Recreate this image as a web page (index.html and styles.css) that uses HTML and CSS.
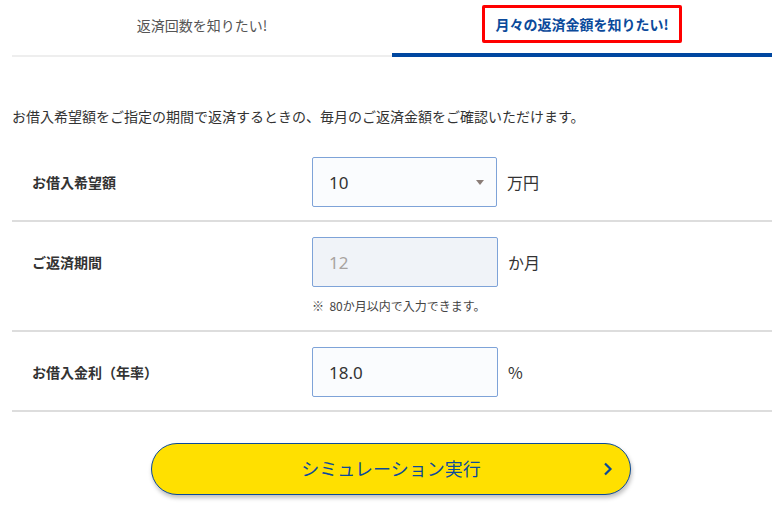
FILE: index.html
```html
<!DOCTYPE html>
<html lang="ja">
<head>
<meta charset="utf-8">
<title>返済シミュレーション</title>
<link rel="stylesheet" href="styles.css">
</head>
<body>
<div class="page">
  <div class="tabs">
    <div class="tab">返済回数を知りたい!</div>
    <div class="tab tab-active"><span class="tab-label">月々の返済金額を知りたい!</span></div>
  </div>
  <p class="lead">お借入希望額をご指定の期間で返済するときの、毎月のご返済金額をご確認いただけます。</p>
  <div class="form">
    <div class="row">
      <div class="label">お借入希望額</div>
      <div class="field">
        <div class="control">
          <div class="box select"><span>10</span><span class="caret"></span></div>
          <span class="unit">万円</span>
        </div>
      </div>
    </div>
    <div class="row">
      <div class="label">ご返済期間</div>
      <div class="field">
        <div class="control">
          <div class="box disabled">12</div>
          <span class="unit">か月</span>
        </div>
        <div class="note">※&nbsp; 80か月以内で入力できます。</div>
      </div>
    </div>
    <div class="row">
      <div class="label">お借入金利（年率）</div>
      <div class="field">
        <div class="control">
          <div class="box">18.0</div>
          <span class="unit">%</span>
        </div>
      </div>
    </div>
  </div>
  <div class="actions">
    <button class="btn" type="button">シミュレーション実行
      <svg class="chev" viewBox="0 0 10 14" width="10" height="14"><path d="M2 1.5 L7.5 7 L2 12.5" fill="none" stroke="#0b4a9b" stroke-width="2.2"/></svg>
    </button>
  </div>
</div>
</body>
</html>
```

FILE: styles.css
```css
* { box-sizing: border-box; }
html, body { margin: 0; padding: 0; background: #fff; }
body {
  font-family: "Noto Sans CJK JP", "Noto Sans", "Liberation Sans", sans-serif;
  color: #333;
}
.page { padding: 0 10px 0 12px; width: 782px; }
.tabs { display: flex; height: 57px; }
.tab {
  flex: 1;
  display: flex;
  align-items: center;
  justify-content: center;
  font-size: 14px;
  color: #555;
  border-bottom: 2px solid #eeeeee;
  padding-bottom: 6px;
}
.tab-active {
  border-bottom: 4px solid #0047a0;
  padding-bottom: 6px;
  color: #0b4a9b;
  font-weight: 700;
}
.tab-label {
  border: 3px solid #ff0000;
  border-radius: 2px;
  padding: 5px 10px;
  line-height: 22px;
}
.lead {
  margin: 47px 0 29px;
  font-size: 14px;
  line-height: 24px;
  color: #333;
}
.row {
  display: flex;
  border-bottom: 2px solid #dddddd;
  padding: 15px 0 13px;
}
.row:first-child { padding-top: 0; }
.label {
  width: 300px;
  padding-left: 20px;
  height: 50px;
  display: flex;
  align-items: center;
  font-size: 14px;
  font-weight: 700;
  color: #333;
}
.field { display: flex; flex-direction: column; }
.control { display: flex; align-items: center; }
.box {
  width: 186px;
  height: 50px;
  border: 1px solid #7ea3d8;
  border-radius: 2px;
  background: #fafcfe;
  display: flex;
  align-items: center;
  padding: 0 16px;
  font-size: 17px;
  color: #333;
  font-family: "Noto Sans", "Noto Sans CJK JP", sans-serif;
}
.select { width: 185px; justify-content: space-between; }
.caret {
  width: 0; height: 0;
  border-left: 4px solid transparent;
  border-right: 4px solid transparent;
  border-top: 5px solid #8a7d78;
  margin-right: -4px;
}
.disabled { background: #f0f3f8; color: #a8a3a0; }
.unit { margin-left: 10px; font-size: 16px; color: #333; }
.note { margin-top: 8px; font-size: 12px; line-height: 22px; color: #444; }
.actions { display: flex; justify-content: center; padding: 31px 0 20px 0; }
.btn {
  position: relative;
  width: 480px;
  height: 52px;
  margin-left: -2px;
  background: #ffe000;
  border: 1px solid #0b4a9b;
  border-radius: 26px;
  box-shadow: 1px 3px 4px rgba(0,0,0,0.25);
  font-family: "Noto Sans CJK JP", sans-serif;
  font-size: 18px;
  color: #0b4a9b;
  cursor: pointer;
  padding: 0 0 2px;
}
.chev { position: absolute; right: 17px; top: 18px; }
```
